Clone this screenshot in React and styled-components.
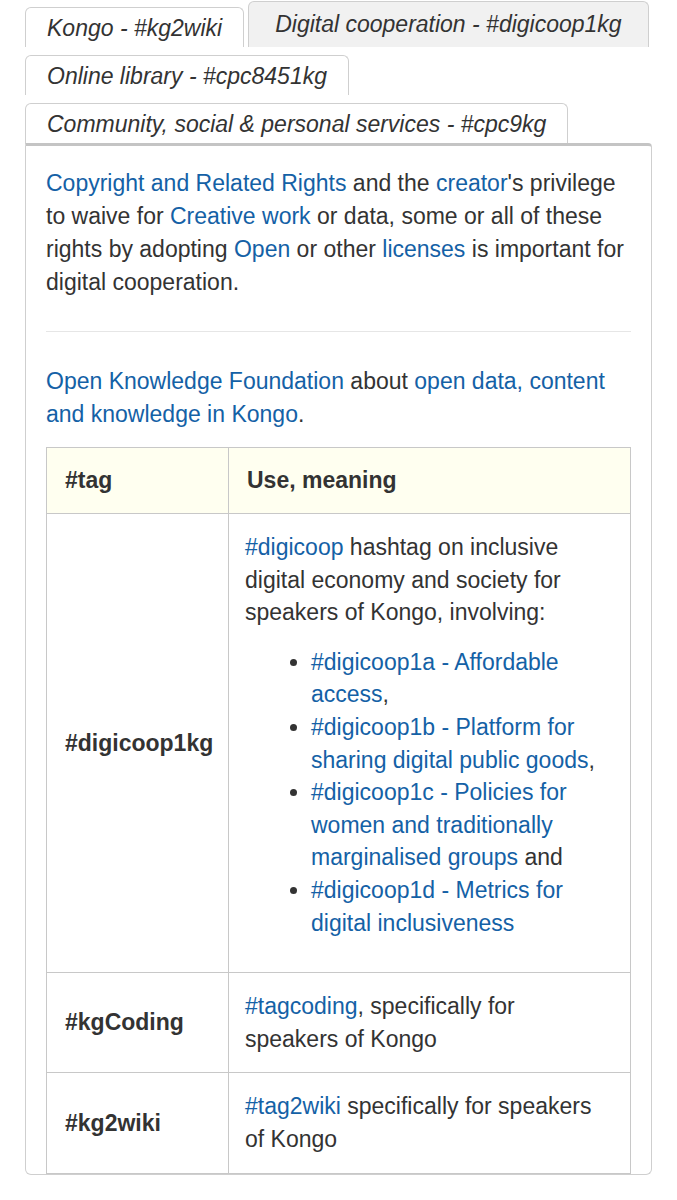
import React from 'react';
import styled, { createGlobalStyle } from 'styled-components';

const GlobalStyle = createGlobalStyle`
  body {
    margin: 0;
    background: #fff;
    font-family: "Liberation Sans", Arial, sans-serif;
    color: #333;
  }
`;

const tabs = [
  { label: 'Kongo - #kg2wiki' },
  { label: 'Digital cooperation - #digicoop1kg', active: true },
  { label: 'Online library - #cpc8451kg' },
  { label: 'Community, social & personal services - #cpc9kg' },
];

const Page = styled.div`
  padding: 1px 25px 0 25px;
  width: 627px;
`;

const TabBar = styled.div`
  display: flex;
  flex-wrap: wrap;
  align-items: flex-end;
  column-gap: 4px;
  row-gap: 8px;
`;

const Tab = styled.div`
  box-sizing: border-box;
  height: ${(p) => (p.$active ? '46px' : '40px')};
  padding: 0 ${(p) => (p.$active ? '26px' : '21px')};
  display: flex;
  align-items: center;
  padding-top: ${(p) => (p.$active ? '0' : '2px')};
  border: 1px solid #cfcfcf;
  border-bottom: none;
  border-radius: 6px 6px 0 0;
  background: ${(p) => (p.$active ? '#f1f1f1' : '#fff')};
  font-style: italic;
  font-size: 23px;
  color: #333;
  white-space: nowrap;
`;

const Panel = styled.div`
  box-sizing: border-box;
  height: 1032px;
  overflow: hidden;
  border: 1px solid #cfcfcf;
  border-top: 3px solid #c4c4c4;
  border-radius: 0 4px 6px 6px;
  padding: 21px 20px 0 20px;
`;

const Para = styled.p`
  margin: 0;
  font-size: 23px;
  line-height: 33px;
`;

const Rule = styled.hr`
  border: none;
  border-top: 1px solid #e6e6e6;
  margin: 32px 0 33px 0;
`;

const Link = styled.a`
  color: #1461a6;
  text-decoration: none;
`;

const Table = styled.table`
  margin-top: 16px;
  width: 100%;
  border-collapse: collapse;
  table-layout: fixed;
  font-size: 23px;
  line-height: 32.6px;
`;

const HeadCell = styled.th`
  box-sizing: border-box;
  background: #fffff0;
  border: 1px solid #c8c8c8;
  text-align: left;
  font-weight: bold;
  height: 66px;
  padding: 0 16px 0 18px;
  width: ${(p) => p.$w || 'auto'};
`;

const TagCell = styled.td`
  border: 1px solid #c8c8c8;
  font-weight: bold;
  padding: 0 10px 0 18px;
  vertical-align: middle;
`;

const Cell = styled.td`
  border: 1px solid #c8c8c8;
  padding: 17px 16px 17px 16px;
  vertical-align: top;
`;

const List = styled.ul`
  margin: 17px 0 16px 0;
  padding-left: 66px;
  li::marker {
    color: #333;
  }
`;

export default function App() {
  return (
    <Page>
      <GlobalStyle />
      <TabBar>
        {tabs.map((t) => (
          <Tab key={t.label} $active={t.active}>
            {t.label}
          </Tab>
        ))}
      </TabBar>
      <Panel>
        <Para>
          <Link>Copyright and Related Rights</Link> and the <Link>creator</Link>'s privilege
          to waive for <Link>Creative work</Link> or data, some or all of these rights by
          adopting <Link>Open</Link> or other <Link>licenses</Link> is important for digital
          cooperation.
        </Para>
        <Rule />
        <Para>
          <Link>Open Knowledge Foundation</Link> about{' '}
          <Link>open data, content and knowledge in Kongo</Link>.
        </Para>
        <Table>
          <thead>
            <tr>
              <HeadCell $w="182px">#tag</HeadCell>
              <HeadCell>Use, meaning</HeadCell>
            </tr>
          </thead>
          <tbody>
            <tr>
              <TagCell>#digicoop1kg</TagCell>
              <Cell>
                <Link>#digicoop</Link> hashtag on inclusive digital economy and society for
                speakers of Kongo, involving:
                <List>
                  <li>
                    <Link>#digicoop1a - Affordable access</Link>,
                  </li>
                  <li>
                    <Link>#digicoop1b - Platform for sharing digital public goods</Link>,
                  </li>
                  <li>
                    <Link>#digicoop1c - Policies for women and traditionally marginalised groups</Link> and
                  </li>
                  <li>
                    <Link>#digicoop1d - Metrics for digital inclusiveness</Link>
                  </li>
                </List>
              </Cell>
            </tr>
            <tr>
              <TagCell>#kgCoding</TagCell>
              <Cell>
                <Link>#tagcoding</Link>, specifically for speakers of Kongo
              </Cell>
            </tr>
            <tr>
              <TagCell>#kg2wiki</TagCell>
              <Cell>
                <Link>#tag2wiki</Link> specifically for speakers of Kongo
              </Cell>
            </tr>
          </tbody>
        </Table>
      </Panel>
    </Page>
  );
}
